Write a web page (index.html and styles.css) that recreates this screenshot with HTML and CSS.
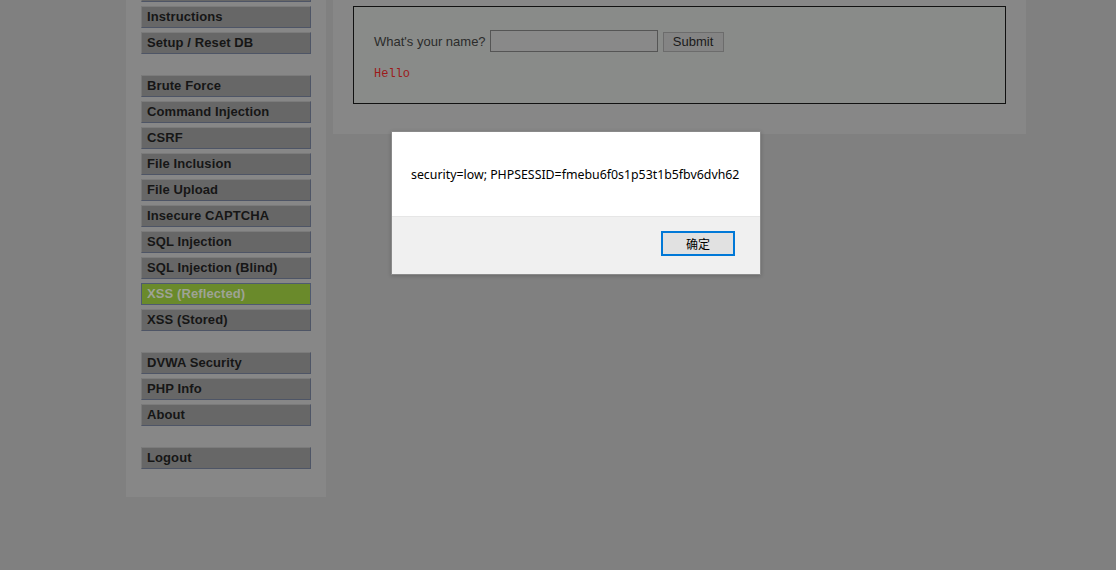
FILE: index.html
```html
<!DOCTYPE html>
<html>
<head>
<meta charset="utf-8">
<title>DVWA</title>
<link rel="stylesheet" href="styles.css">
</head>
<body>
<div class="page">
  <div class="sidebar">
    <ul class="menu">
      <li><a class="item">Home</a></li>
      <li><a class="item">Instructions</a></li>
      <li><a class="item">Setup / Reset DB</a></li>
    </ul>
    <ul class="menu">
      <li><a class="item">Brute Force</a></li>
      <li><a class="item">Command Injection</a></li>
      <li><a class="item">CSRF</a></li>
      <li><a class="item">File Inclusion</a></li>
      <li><a class="item">File Upload</a></li>
      <li><a class="item">Insecure CAPTCHA</a></li>
      <li><a class="item">SQL Injection</a></li>
      <li><a class="item">SQL Injection (Blind)</a></li>
      <li><a class="item selected">XSS (Reflected)</a></li>
      <li><a class="item">XSS (Stored)</a></li>
    </ul>
    <ul class="menu">
      <li><a class="item">DVWA Security</a></li>
      <li><a class="item">PHP Info</a></li>
      <li><a class="item">About</a></li>
    </ul>
    <ul class="menu">
      <li><a class="item">Logout</a></li>
    </ul>
  </div>
  <div class="main">
    <div class="vuln-box">
      <form class="name-form">
        <span class="label">What's your name?</span>
        <span class="input"></span>
        <span class="submit">Submit</span>
      </form>
      <pre class="hello">Hello</pre>
    </div>
  </div>
</div>

<div class="dialog">
  <div class="dialog-body">security=low; PHPSESSID=fmebu6f0s1p53t1b5fbv6dvh62</div>
  <div class="dialog-foot">
    <span class="ok">确定</span>
  </div>
</div>
</body>
</html>
```

FILE: styles.css
```css
html, body {
  margin: 0;
  padding: 0;
}
body {
  background: #808080;
  font-family: "Liberation Sans", Arial, sans-serif;
  width: 1116px;
  height: 570px;
  overflow: hidden;
}
.page {
  display: flex;
  align-items: flex-start;
  margin-left: 126px;
  gap: 7px;
}
.sidebar {
  width: 200px;
  box-sizing: border-box;
  background: #878787;
  padding: 0 15px 28px;
  margin-top: -20px;
  display: flex;
  flex-direction: column;
  gap: 21px;
}
.menu {
  list-style: none;
  margin: 0;
  padding: 0;
  display: flex;
  flex-direction: column;
  gap: 4px;
}
.item {
  display: block;
  height: 22px;
  box-sizing: border-box;
  line-height: 20px;
  padding-left: 5px;
  background: #676767;
  border-top: 1px solid #7b7b7b;
  border-left: 1px solid #787878;
  border-right: 1px solid #4e5566;
  border-bottom: 1px solid #4e5566;
  color: #161616;
  font-weight: bold;
  font-size: 13px;
  letter-spacing: 0.1px;
}
.item.selected {
  background: #6a8a2b;
  border-color: #4f5a70;
  color: #9ea395;
}
.main {
  width: 693px;
  box-sizing: border-box;
  background: #878787;
  padding: 6px 20px 30px;
}
.vuln-box {
  background: #898b89;
  border: 1px solid #111;
  padding: 23px 20px 22px;
}
.name-form {
  display: flex;
  align-items: center;
  height: 22px;
  margin: 0;
  font-size: 13px;
  color: #2b2b2b;
}
.label {
  margin-right: 4px;
}
.input {
  display: block;
  width: 168px;
  height: 22px;
  box-sizing: border-box;
  border: 1px solid #555;
  background: #898989;
}
.submit {
  display: block;
  margin-left: 5px;
  margin-top: 2px;
  width: 61px;
  height: 20px;
  box-sizing: border-box;
  border: 1px solid #6c6c6c;
  background: #848484;
  color: #1a1a1a;
  text-align: center;
  line-height: 18px;
  font-size: 13px;
}
.hello {
  margin: 15px 0 0;
  font-family: "Liberation Mono", "Courier New", monospace;
  font-size: 12px;
  line-height: 14px;
  color: #9c1a1a;
}
.dialog {
  position: fixed;
  left: 391px;
  top: 131px;
  width: 370px;
  height: 144px;
  box-sizing: border-box;
  border: 1px solid #8a8a8a;
  background: #fff;
  box-shadow: 0 1px 4px rgba(0, 0, 0, 0.2);
  display: flex;
  flex-direction: column;
  font-family: "Noto Sans", "Noto Sans CJK SC", sans-serif;
}
.dialog-body {
  height: 85px;
  box-sizing: border-box;
  padding: 34px 0 0 19px;
  font-size: 12.35px;
  line-height: 18px;
  color: #000;
  background: #fff;
  border-bottom: 1px solid #e6e6e6;
}
.dialog-foot {
  flex: 1;
  background: #f0f0f0;
  display: flex;
  justify-content: flex-end;
  align-items: flex-start;
  padding: 14px 25px 0 0;
}
.ok {
  display: block;
  width: 74px;
  height: 25px;
  box-sizing: border-box;
  border: 2px solid #0078d7;
  background: #e1e1e1;
  text-align: center;
  line-height: 21px;
  font-size: 12px;
  color: #000;
  font-family: "Noto Sans CJK SC", sans-serif;
}
```
